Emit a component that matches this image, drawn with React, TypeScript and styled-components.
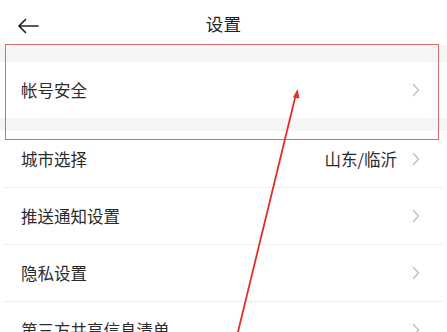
import React from 'react';
import styled, { createGlobalStyle } from 'styled-components';

const GlobalStyle = createGlobalStyle`
  html, body {
    margin: 0;
    padding: 0;
    background: #ffffff;
    font-family: "Noto Sans CJK SC", "Noto Sans", sans-serif;
  }
`;

interface rowProps {
  label: string;
  value?: string;
}

const rows: rowProps[] = [
  { label: '城市选择', value: '山东/临沂' },
  { label: '推送通知设置' },
  { label: '隐私设置' },
  { label: '第三方共享信息清单' },
];

const BackIcon = () => (
  <svg width="22" height="16" viewBox="0 0 22 16">
    <path
      d="M21 8H2M8.5 1.5L2 8l6.5 6.5"
      fill="none"
      stroke="#222"
      strokeWidth="1.7"
      strokeLinecap="round"
      strokeLinejoin="round"
    />
  </svg>
);

const Chevron = () => (
  <svg width="8" height="14" viewBox="0 0 8 14">
    <path
      d="M1.5 1.5L6.5 7l-5 5.5"
      fill="none"
      stroke="#c4c4c4"
      strokeWidth="1.6"
      strokeLinecap="round"
      strokeLinejoin="round"
    />
  </svg>
);

const SettingRow = ({ label, value }: rowProps) => (
  <Row>
    <Label>{label}</Label>
    <Right>
      {value && <Value>{value}</Value>}
      <Chevron />
    </Right>
  </Row>
);

const App = () => {
  return (
    <Page>
      <GlobalStyle />
      <Header>
        <BackButton>
          <BackIcon />
        </BackButton>
        <Title>设置</Title>
      </Header>
      <Gap $h={17} />
      <SettingRow label="帐号安全" />
      <Gap $h={13} />
      <List>
        {rows.map((r) => (
          <SettingRow key={r.label} label={r.label} value={r.value} />
        ))}
      </List>

      <Highlight />
      <Pointer viewBox="0 0 447 332" width="447" height="332">
        <line
          x1="236"
          y1="340"
          x2="296"
          y2="94"
          stroke="#e0302c"
          strokeWidth="1.8"
        />
        <path d="M297.5 89L293 97.5l6.5 1z" fill="#e0302c" />
      </Pointer>
    </Page>
  );
};

export default App;

const Page = styled.div`
  position: relative;
  width: 447px;
  height: 332px;
  overflow: hidden;
  background: #fff;
`;

const Header = styled.div`
  height: 45px;
  display: flex;
  align-items: center;
  justify-content: center;
  position: relative;
  padding-top: 2px;
  box-sizing: border-box;
`;

const BackButton = styled.div`
  position: absolute;
  left: 17px;
  top: 18px;
  display: flex;
`;

const Title = styled.div`
  font-size: 17.5px;
  color: #222;
  letter-spacing: 0.3px;
`;

const Gap = styled.div<{ $h: number }>`
  height: ${(p) => p.$h}px;
  background: #f5f5f5;
`;

const List = styled.div`
  display: flex;
  flex-direction: column;
  & > div:not(:last-child) {
    border-bottom: 1px solid #efefef;
  }
`;

const Row = styled.div`
  height: 56px;
  display: flex;
  align-items: center;
  justify-content: space-between;
  padding: 0 23px 0 18px;
  margin: 0 4px 0 3px;
  background: #fff;
`;

const Label = styled.div`
  font-size: 16.5px;
  color: #2b2b2b;
`;

const Right = styled.div`
  display: flex;
  align-items: center;
  gap: 15px;
`;

const Value = styled.div`
  font-size: 16.5px;
  color: #2b2b2b;
`;

const Highlight = styled.div`
  position: absolute;
  left: 5px;
  top: 44px;
  width: 434px;
  height: 96px;
  box-sizing: border-box;
  border: 1.5px solid #e06a6a;
  pointer-events: none;
`;

const Pointer = styled.svg`
  position: absolute;
  left: 0;
  top: 0;
  pointer-events: none;
`;
